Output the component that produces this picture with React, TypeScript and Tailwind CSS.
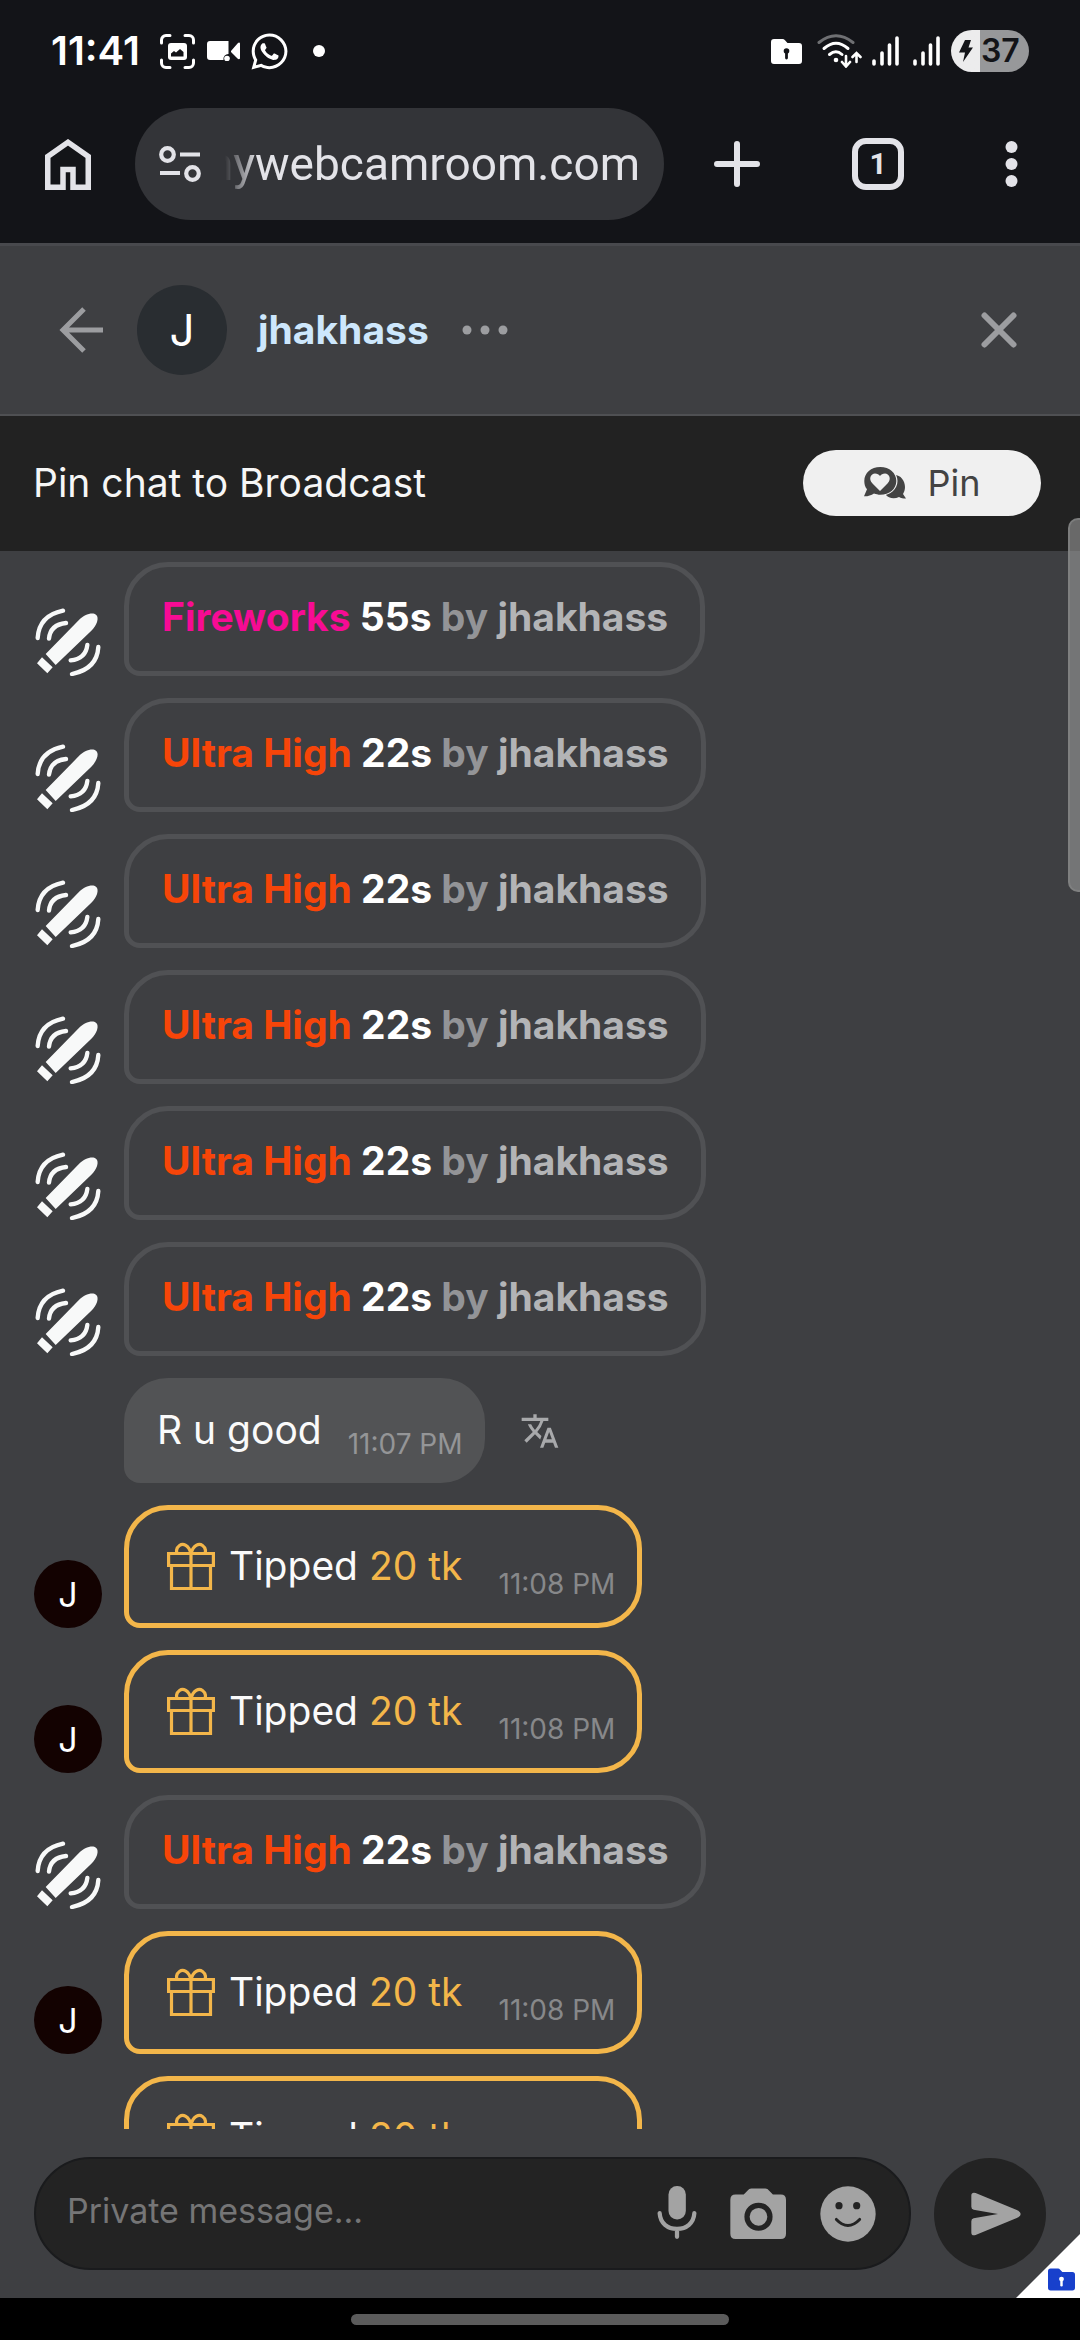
import { FaWhatsapp } from 'react-icons/fa';
import { MdTranslate } from 'react-icons/md';

type Message =
  | { kind: 'toy'; level: string; color: string; seconds: string; user: string }
  | { kind: 'text'; body: string; time: string }
  | { kind: 'tip'; amount: string; time: string };

const ultra: Message = { kind: 'toy', level: 'Ultra High', color: 'text-[#f74509]', seconds: '22s', user: 'jhakhass' };
const tip: Message = { kind: 'tip', amount: '20 tk', time: '11:08 PM' };

const messages: Message[] = [
  { kind: 'toy', level: 'Fireworks', color: 'text-[#f70b94]', seconds: '55s', user: 'jhakhass' },
  ultra,
  ultra,
  ultra,
  ultra,
  ultra,
  { kind: 'text', body: 'R u good', time: '11:07 PM' },
  tip,
  tip,
  ultra,
  tip,
  tip,
];

function FolderIcon({ className, hole }: { className: string; hole: string }) {
  return (
    <svg viewBox="0 0 31 25" className={className} fill="currentColor" aria-hidden="true">
      <path d="M3 0h8.500c1 0 1.800.4 2.500 1.200L16.500 4H28a3 3 0 0 1 3 3v15a3 3 0 0 1-3 3H3a3 3 0 0 1-3-3V3a3 3 0 0 1 3-3Z" />
      <circle cx="15.500" cy="12" r="2.800" fill={hole} />
      <path d="M15.500 12v7" stroke={hole} strokeWidth="2.800" strokeLinecap="round" />
    </svg>
  );
}

function SignalIcon() {
  return (
    <svg viewBox="0 0 27 30" className="w-[27px] h-[30px]" stroke="currentColor" strokeWidth="3.600" strokeLinecap="round" aria-hidden="true">
      <path d="M2 25v3M10 17v11M17.500 9v19M25 2v26" />
    </svg>
  );
}

function StatusBar() {
  return (
    <div className="flex items-center justify-between h-[102px] pl-[51px] pr-[51px] text-white">
      <div className="flex items-center">
        <span className="text-[40px] leading-[46px] font-semibold">11:41</span>
        <svg viewBox="0 0 35 35" className="w-[35px] h-[35px] ml-5" fill="none" aria-hidden="true">
          <path d="M1.500 9V6a4.500 4.500 0 0 1 4.500-4.500h4M25 1.500h4A4.500 4.500 0 0 1 33.500 6v3M33.500 26v3a4.500 4.500 0 0 1-4.500 4.500h-4M10 33.500H6A4.500 4.500 0 0 1 1.500 29v-3" stroke="currentColor" strokeWidth="3" strokeLinecap="round" />
          <rect x="8" y="9" width="19" height="17" rx="3" fill="currentColor" />
          <path d="M11 22.500v-3l3-2.500 2 1.500 4-3.500 3.500 3v4.500Z" fill="#131418" />
        </svg>
        <svg viewBox="0 0 33 20" className="w-[33px] h-5 ml-3" fill="currentColor" aria-hidden="true">
          <path d="M3 0h18.500v13a5 5 0 0 0-5 6H3a3 3 0 0 1-3-3V3a3 3 0 0 1 3-3ZM24 10l6.500-7.500q2-2 2.500 0v15q-1 1.500-2.500 0L24 11Z" />
          <circle cx="20" cy="17.500" r="2.800" />
        </svg>
        <FaWhatsapp className="w-[41px] h-[41px] ml-[9px]" aria-hidden="true" />
        <span className="w-3 h-3 ml-[23px] rounded-full bg-white" />
      </div>
      <div className="flex items-center">
        <FolderIcon className="w-[31px] h-[25px]" hole="#131418" />
        <svg viewBox="0 0 45 34" className="w-[45px] h-[34px] ml-[15px]" fill="none" stroke="currentColor" strokeWidth="3" strokeLinecap="round" aria-hidden="true">
          <path d="M2 8.500Q19 -5 36 8.500" stroke="#6f7073" />
          <path d="M7 14.500Q19 4 31 14.500M12.500 20.500Q19 15 25 20.500" />
          <circle cx="19" cy="26" r="2.300" fill="currentColor" stroke="none" />
          <path d="M29 22v9.500M25 28l4 4.500 4-4.500M39.500 28v-8.500M35.500 23l4-4 4 4" strokeWidth="2.600" />
        </svg>
        <span className="ml-[10px]"><SignalIcon /></span>
        <span className="ml-[14px]"><SignalIcon /></span>
        <div className="flex items-center w-[78px] h-[42px] ml-[11px] rounded-full overflow-hidden bg-linear-to-r from-[#ececed] from-37% to-[#97989a] to-37% text-[#131418]">
          <svg viewBox="0 0 14 22" className="w-[14px] h-[22px] ml-2" fill="currentColor" aria-hidden="true">
            <path d="M6 0h6L9.500 7.500H14L4 22l2-9.500H0Z" />
          </svg>
          <span className="ml-2 text-[32px] leading-[42px] font-semibold">37</span>
        </div>
      </div>
    </div>
  );
}

function BrowserBar() {
  return (
    <div className="flex items-center h-[141px] pb-[17px] pl-[45px] pr-[62px] text-[#e3e3e8]">
      <button aria-label="Home">
        <svg viewBox="0 0 46 51" className="w-[46px] h-[51px]" fill="none" stroke="currentColor" strokeWidth="5.500" aria-hidden="true">
          <path d="M2.750 17.500 23 3.300l20.250 14.200v30.750H28V30.500H18v17.750H2.750Z" />
        </svg>
      </button>
      <div className="flex flex-1 min-w-0 items-center h-28 ml-11 pl-6 pr-6 rounded-full bg-[#333438]">
        <button aria-label="Site settings">
          <svg viewBox="0 0 42 36" className="w-[42px] h-9" fill="none" stroke="currentColor" strokeWidth="4.200" aria-hidden="true">
            <circle cx="8.500" cy="8.500" r="6.300" />
            <circle cx="33.500" cy="27.500" r="6.300" />
            <path d="M21 8.500h20M1 27h20" />
          </svg>
        </button>
        <input
          aria-label="Address"
          dir="rtl"
          readOnly
          value="mywebcamroom.com"
          className="flex-1 min-w-0 ml-6 text-[46px] leading-[56px] font-[Roboto,sans-serif] bg-transparent outline-none [mask-image:linear-gradient(to_right,transparent,black_32px)]"
        />
      </div>
      <button aria-label="New tab" className="ml-[50px]">
        <svg viewBox="0 0 46 46" className="w-[46px] h-[46px]" stroke="currentColor" strokeWidth="6" strokeLinecap="round" aria-hidden="true">
          <path d="M23 3v40M3 23h40" />
        </svg>
      </button>
      <button aria-label="Tabs" className="w-[52px] h-[52px] ml-[92px] border-[6px] border-current rounded-[14px] text-[30px] leading-10 font-bold font-[Roboto,sans-serif]">
        1
      </button>
      <button aria-label="Browser menu" className="ml-[101px]">
        <svg viewBox="0 0 13 48" className="w-[13px] h-12" fill="currentColor" aria-hidden="true">
          <circle cx="6.500" cy="7" r="6" />
          <circle cx="6.500" cy="24" r="6" />
          <circle cx="6.500" cy="41" r="6" />
        </svg>
      </button>
    </div>
  );
}

function ChatHeader() {
  return (
    <header className="flex items-center h-[173px] pl-[59px] pr-[63px] border-t-[3px] border-t-[#48494d] border-b-2 border-b-[#4f5053] text-[#9c9da0]">
      <button aria-label="Back">
        <svg viewBox="0 0 44 46" className="w-11 h-[46px]" fill="none" stroke="currentColor" strokeWidth="5" aria-hidden="true">
          <path d="M44 23H4M25 2 4 23l21 21" />
        </svg>
      </button>
      <span className="flex items-center justify-center w-[90px] h-[90px] ml-[34px] rounded-full bg-[#292d31] text-[44px] text-white">J</span>
      <h1 className="ml-[31px] text-[39px] leading-[48px] font-bold text-[#cde7fc]">jhakhass</h1>
      <button aria-label="More" className="ml-[33px]">
        <svg viewBox="0 0 46 10" className="w-[46px] h-[10px]" fill="currentColor" aria-hidden="true">
          <circle cx="5" cy="5" r="4.500" />
          <circle cx="23" cy="5" r="4.500" />
          <circle cx="41" cy="5" r="4.500" />
        </svg>
      </button>
      <button aria-label="Close" className="ml-auto">
        <svg viewBox="0 0 36 36" className="w-9 h-9" stroke="currentColor" strokeWidth="6" strokeLinecap="round" aria-hidden="true">
          <path d="m3.500 3.500 29 29M32.500 3.500l-29 29" />
        </svg>
      </button>
    </header>
  );
}

function PinBar() {
  return (
    <div className="flex items-center justify-between h-[135px] pb-[2px] pl-[33px] pr-[39px] bg-[#222222]">
      <p className="text-[39px] leading-[48px] text-[#f6f6f6]">Pin chat to Broadcast</p>
      <button className="flex items-center justify-center h-[66px] w-[238px] gap-[22px] rounded-full bg-[#f0f0f0] text-[#434343]">
        <svg viewBox="0 0 42 32" className="w-[42px] h-8" fill="currentColor" aria-hidden="true">
          <path d="M29 8c7-1 12 5 12 12 0 3-1 5-2 7l3 4.500c-3 0-5-.5-7-1.500-5 2.500-11 1-13-2Z" />
          <path d="M16.300-.5C26-.5 33.500 5.500 33.500 14S26 28.500 16.300 28.500L0 32Z" fill="#f0f0f0" />
          <path d="M16.300 0C25.500 0 32.300 6 32.300 14s-7 13.800-16 13.800c-2.300 0-4.300-.8-6.300-1.300-3 2-6.500 3-10 2.800l3-7C1 20 .3 17 .3 14 .3 6 7 0 16.300 0Z" />
          <path d="M16 24 8.500 16.500C4 12 7 6.500 11 6.500c2.200 0 4 1 5 2.500 1-1.500 2.800-2.500 5-2.500 4 0 7 5.500 2.500 10Z" fill="#f0f0f0" />
        </svg>
        <span className="text-[36px] leading-[42px]">Pin</span>
      </button>
    </div>
  );
}

function ToyIcon() {
  return (
    <svg viewBox="42 45 204 204" className="w-[68px] h-[68px] shrink-0 text-[#f8f9f9]" aria-hidden="true">
      <path d="M77 183 176 82C192 65 217 56 228 65s2 32-14 48L107 216ZM66 193l32 30-16 18-31-30Z" fill="currentColor" />
      <path d="M53 135Q57 68 129 53M87 137Q91 95 138 90M202 156Q197 198 152 202M235 162Q231 228 156 243" fill="none" stroke="currentColor" strokeWidth="13" strokeLinecap="round" />
    </svg>
  );
}

function GiftIcon() {
  return (
    <svg viewBox="0 0 48 48" className="w-12 h-12" fill="none" stroke="currentColor" strokeWidth="3.200" aria-hidden="true">
      <path d="M1.600 11.500h44.800v12H1.600ZM4.500 23.500h39v23h-39ZM24 11.500v35" />
      <path d="M24 12C22 3 16 1 12.500 3.500S9 10 10.500 11.500M24 12c2-9 8-11 11.500-8.500S39 10 37.500 11.500" />
    </svg>
  );
}

function MessageRow({ message }: { message: Message }) {
  if (message.kind === 'toy') {
    return (
      <li className="flex items-end gap-[22px]">
        <ToyIcon />
        <p className="pt-[26px] pb-[30px] pl-[33px] pr-8 border-[5px] border-[#505154] rounded-[44px] rounded-bl-[16px] text-[39px] leading-[48px] font-bold text-[#939497]">
          <span className={message.color}>{message.level}</span> <span className="text-white">{message.seconds}</span> by{' '}
          <span className="text-[#b3b4b6]">{message.user}</span>
        </p>
      </li>
    );
  }

  if (message.kind === 'text') {
    return (
      <li className="flex items-center pl-[90px]">
        <div className="flex items-end gap-[26px] pt-7 pb-[29px] pl-[33px] pr-[22px] rounded-[44px] rounded-bl-[16px] bg-[#525355]">
          <p className="text-[39px] leading-[48px] text-[#fafafa]">{message.body}</p>
          <time className="-mb-2 text-[28px] leading-[36px] text-[#949597]">{message.time}</time>
        </div>
        <button aria-label="Translate" className="ml-[35px] text-[#a8a9ab]">
          <MdTranslate className="w-10 h-10" />
        </button>
      </li>
    );
  }

  return (
    <li className="flex items-end gap-[22px]">
      <span className="flex items-center justify-center w-[68px] h-[68px] shrink-0 rounded-full bg-[#130201] text-[34px] text-white">J</span>
      <div className="flex items-end pt-8 pb-[33px] pl-[38px] pr-[22px] border-[5px] border-[#f3b64a] rounded-[44px] rounded-bl-[16px] text-[#f3b64a]">
        <GiftIcon />
        <p className="ml-[14px] text-[39px] leading-[48px]">
          <span className="text-[#fafafa]">Tipped</span> {message.amount}
        </p>
        <time className="-mb-3 ml-[36px] text-[28px] leading-[36px] text-[#87888a]">{message.time}</time>
      </div>
    </li>
  );
}

function Composer() {
  return (
    <footer className="relative flex items-center gap-[23px] pt-7 pb-7 pl-[34px] pr-[34px]">
      <div className="flex flex-1 min-w-0 items-center h-[113px] pl-[31px] pr-[33px] border-2 border-[#1a1b1d] rounded-full bg-[#232323] text-[#a3a3a3]">
        <input
          aria-label="Private message"
          placeholder="Private message..."
          className="flex-1 min-w-0 h-12 mb-[6px] text-[34px] leading-[42px] bg-transparent text-white outline-none placeholder:text-[#757576]"
        />
        <button aria-label="Record voice">
          <svg viewBox="167 379 120 171" className="w-10 h-14" aria-hidden="true">
            <rect x="201" y="379" width="53" height="102" rx="26" fill="currentColor" />
            <path d="M174 462c2 31 24 48 53 48s51-17 53-48M227 510v24" fill="none" stroke="currentColor" strokeWidth="13" strokeLinecap="round" />
          </svg>
        </button>
        <button aria-label="Send photo" className="ml-[33px]">
          <svg viewBox="387 379 171 171" className="w-14 h-14" fill="currentColor" aria-hidden="true">
            <path fillRule="evenodd" d="M452 387h43q7 0 11 6l12 12h24q16 0 16 16v104q0 16-16 16H404q-16 0-16-16V421q0-16 16-16h25l12-12q4-6 11-6Zm22 43a43 43 0 1 0 0 86 43 43 0 0 0 0-86Z" />
            <circle cx="474" cy="473" r="27" />
          </svg>
        </button>
        <button aria-label="Emoji" className="ml-[34px]">
          <svg viewBox="658 379 171 171" className="w-14 h-14" aria-hidden="true">
            <circle cx="743.500" cy="464.500" r="84.500" fill="currentColor" />
            <circle cx="716" cy="439" r="11" fill="#232323" />
            <circle cx="770" cy="439" r="11" fill="#232323" />
            <path d="M708 481q35 37 71 0" fill="none" stroke="#232323" strokeWidth="9" strokeLinecap="round" />
          </svg>
        </button>
      </div>
      <button aria-label="Send" className="flex items-center justify-center w-28 h-28 pl-[11px] rounded-full bg-[#232323] text-[#a3a3a3]">
        <svg viewBox="1112 394 152 132" className="w-[50px] h-[44px]" fill="currentColor" aria-hidden="true">
          <path d="M1126 396 1256 450q14 10 0 20L1126 524q-13 3-13-8V482q0-7 7-9l74-13-74-13q-7-2-7-9V404q0-11 13-8Z" />
        </svg>
      </button>
      <div className="absolute right-0 bottom-0 flex items-end justify-end w-16 h-16 pr-[5px] pb-[7px] bg-white text-[#1840cc] [clip-path:polygon(100%_0,100%_100%,0_100%)]">
        <FolderIcon className="w-[27px] h-[23px]" hole="#ffffff" />
      </div>
    </footer>
  );
}

export default function App() {
  return (
    <div className="flex flex-col h-screen overflow-hidden bg-[#3e3f42] font-[Inter,sans-serif]">
      <div className="bg-[#131418]">
        <StatusBar />
        <BrowserBar />
      </div>
      <ChatHeader />
      <PinBar />
      <main className="relative flex-1 min-h-0">
        <ul className="flex flex-col gap-[22px] h-full pt-[11px] pl-[34px] overflow-hidden [&>li]:shrink-0">
          {messages.map((message, i) => (
            <MessageRow key={i} message={message} />
          ))}
        </ul>
        {/* overlay scrollbar thumb */}
        <div className="absolute -top-[33px] right-0 w-3 h-[374px] rounded-l-[10px] border-2 border-r-0 border-[#858687]/70 bg-[#9a9a9a]/60" />
      </main>
      <Composer />
      <div className="flex items-center justify-center h-[42px] bg-black">
        <span className="w-[35%] h-[11px] rounded-full bg-[#5b5b5b]" />
      </div>
    </div>
  );
}
